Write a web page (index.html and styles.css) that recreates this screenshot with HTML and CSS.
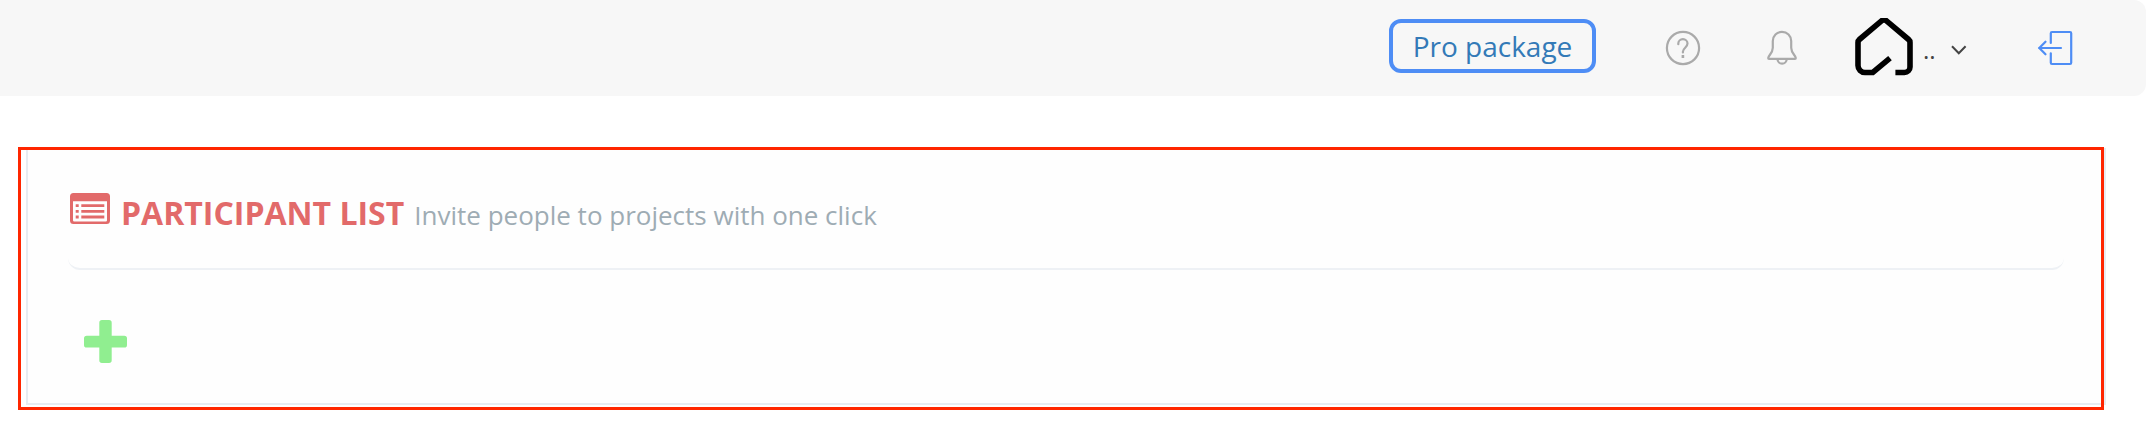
FILE: index.html
```html
<!DOCTYPE html>
<html lang="en">
<head>
<meta charset="utf-8">
<title>Participant list</title>
<link rel="stylesheet" href="styles.css">
</head>
<body>
<header class="topbar">
  <a class="pro">Pro package</a>
  <svg class="icon help" viewBox="0 0 36 36" width="36" height="36">
    <circle cx="18" cy="18" r="16.1"/>
    <path d="M13.300 14.200V13.600a4.600 4.400 0 0 1 9.200 0c0 3.900-4.600 4.400-4.600 8.200v.6"/>
    <path class="dot" d="M16.600 25h2.600v3h-2.600z"/>
  </svg>
  <svg class="icon bell" viewBox="0 0 32 36" width="32" height="36">
    <path d="M16 1.900c-5.200 0-9.200 4-9.200 9.200v6.600c0 5.400-4.600 8-4.600 10.300 0 .5.3.8.8.8h26c.5 0 .8-.3.8-.8 0-2.300-4.600-4.900-4.600-10.300v-6.600c0-5.200-4-9.200-9.200-9.200z"/>
    <path d="M11.500 29a4.600 4.700 0 0 0 9.200 0"/>
  </svg>
  <div class="account">
    <svg class="logo" viewBox="0 0 58 58" width="58" height="58">
      <path d="M40.400 54.500h9.100a5.500 5.500 0 0 0 5.500-5.500V24.600a4 4 0 0 0-1.400-3.100L31.500 2.900a4 4 0 0 0-5 0L4.400 21.500A4 4 0 0 0 3 24.600V47.500a7 7 0 0 0 7 7h7.800L35 40.200"/>
    </svg>
    <span class="name">..</span>
    <svg class="chevron" viewBox="0 0 16 10" width="16" height="10"><path d="M1 1.200l6.800 7 6.800-7"/></svg>
  </div>
  <svg class="icon logout" viewBox="0 0 36 36" width="36" height="36">
    <path d="M13.800 13V3.200a1.200 1.200 0 0 1 1.200-1.200h18a1.200 1.200 0 0 1 1.200 1.200v29.600a1.200 1.200 0 0 1-1.200 1.200h-18a1.200 1.200 0 0 1-1.200-1.200V23.300"/>
    <path d="M24 18H2M8.500 11.700L2.300 18l6.200 6.300"/>
  </svg>
</header>
<main class="stage">
  <section class="panel">
    <div class="heading">
      <svg class="list-icon" viewBox="0 0 40 32" width="40" height="32">
        <path fill-rule="evenodd" d="M3.500 0h33A3.500 3.500 0 0 1 40 3.500v24a3.500 3.500 0 0 1-3.500 3.500h-33A3.500 3.500 0 0 1 0 27.500v-24A3.500 3.500 0 0 1 3.500 0zM3 8.300v19a1.200 1.200 0 0 0 1.200 1.200h31.600a1.200 1.200 0 0 0 1.200-1.200v-19z"/>
        <path d="M5.700 11.200h3v2.900h-3zM5.700 16.900h3v2.900h-3zM5.700 22.600h3v2.900h-3zM11.300 11.200h23v2.900h-23zM11.300 16.900h23v2.900h-23zM11.300 22.600h23v2.900h-23z"/>
      </svg>
      <h1 class="title">PARTICIPANT LIST</h1>
      <span class="subtitle">Invite people to projects with one click</span>
    </div>
    <svg class="plus" viewBox="0 0 43 43" width="43" height="43">
      <path d="M18 0h7a2.700 2.700 0 0 1 2.700 2.700V15.700H40.300A2.700 2.700 0 0 1 43 18.400v6.500a2.700 2.700 0 0 1-2.700 2.700H27.700V40.300A2.700 2.700 0 0 1 25 43h-7a2.700 2.700 0 0 1-2.700-2.700V27.600H2.700A2.700 2.700 0 0 1 0 24.900v-6.500a2.700 2.700 0 0 1 2.700-2.700H15.300V2.700A2.700 2.700 0 0 1 18 0z"/>
    </svg>
  </section>
  <div class="highlight"></div>
</main>
</body>
</html>
```
FILE: styles.css
```css
* { box-sizing: border-box; }
body {
  margin: 0;
  height: 432px;
  overflow: hidden;
  background: #fff;
  font-family: "Open Sans", sans-serif;
}
svg { display: block; flex: none; fill: none; }

.topbar {
  display: flex;
  justify-content: flex-end;
  height: 96px;
  padding-right: 73px;
  background: #f7f7f7;
  border-radius: 0 12px 12px 0;
}
.pro {
  width: 207px;
  height: 54px;
  margin: 19px 69px 0 0;
  border: 4px solid #4e8df5;
  border-radius: 12px;
  color: #337ab7;
  font-size: 28px;
  line-height: 46px;
  text-align: center;
  white-space: nowrap;
}
.icon { margin-top: 30px; stroke: #aaa; stroke-width: 2.2; stroke-linecap: round; stroke-linejoin: round; }
.help { margin-right: 65px; }
.help .dot { fill: #aaa; stroke: none; }
.bell { margin-right: 56px; }
.account { display: flex; width: 183px; }
.logo { margin: 18px 10px 0 1px; stroke: #000; stroke-width: 5.6; }
.name { width: 18px; margin: 34px 8px 0 0; color: #444; font-size: 24px; line-height: 32px; }
.chevron { margin: 45px 0 0 2px; stroke: #444; stroke-width: 2; }
.logout { stroke: #4e8df5; }

.stage { position: relative; padding: 52px 40px 0 26px; }
.panel {
  height: 257px;
  padding: 30px 40px 0;
  border: 2px solid #e7ecf1;
  border-top: 0;
  background: #fefefe;
}
.heading {
  display: flex;
  align-items: flex-start;
  height: 92px;
  padding: 15px 0 0 2px;
  border-bottom: 2px solid #eef1f5;
  border-radius: 12px;
}
.list-icon { fill: #e26a6a; }
.title {
  margin: 0 10px 0 11px;
  color: #e26a6a;
  font-size: 32px;
  font-weight: 700;
  line-height: 40px;
  white-space: nowrap;
}
.subtitle { margin-top: 2px; color: #9eacb4; font-size: 26px; line-height: 40px; white-space: nowrap; }
.plus { margin: 50px 0 0 16px; fill: #90ee90; }

/* Outline drawn over the panel edge */
.highlight {
  position: absolute;
  top: 51px;
  left: 18px;
  width: 2086px;
  height: 263px;
  border: 3px solid #ff2600;
}
```
